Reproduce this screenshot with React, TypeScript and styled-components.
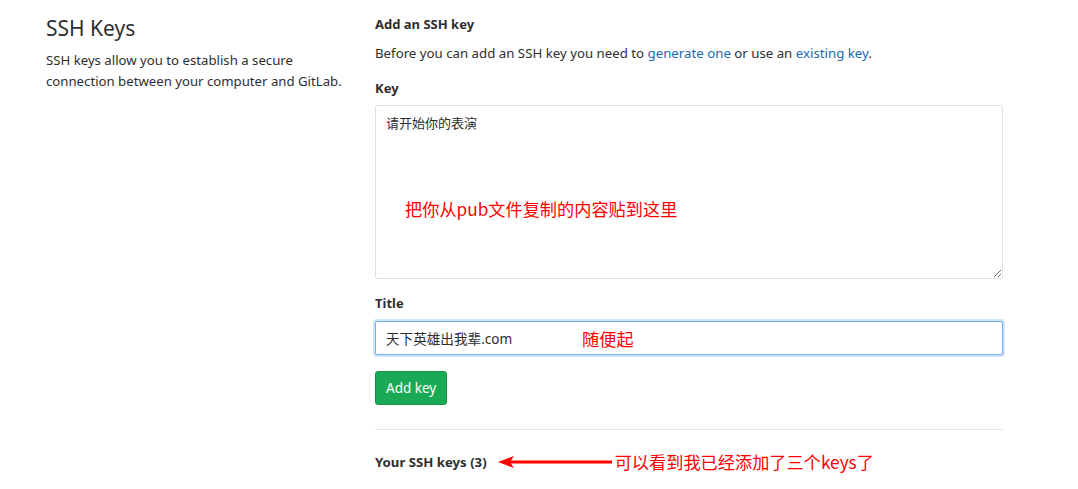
import React from "react";
import styled, { createGlobalStyle } from "styled-components";

const Global = createGlobalStyle`
  html, body { margin: 0; padding: 0; background: #fff; }
  body { font-family: "Noto Sans", "Noto Sans CJK SC", sans-serif; color: #2e2e2e; }
  * { box-sizing: border-box; }
`;

const Page = styled.div`
  display: flex;
  padding: 14px 0 0 46px;
  width: 1078px;
  height: 489px;
  overflow: hidden;
`;

const Side = styled.div`
  width: 329px;
  flex: none;
`;

const SideTitle = styled.h4`
  margin: 0;
  font-size: 21px;
  font-weight: 400;
  line-height: 28px;
  color: #2e2e2e;
`;

const SideText = styled.p`
  margin: 8px 0 0;
  font-size: 13.2px;
  line-height: 21px;
  color: #2e2e2e;
  width: 300px;
`;

const Main = styled.div`
  width: 628px;
  flex: none;
  display: flex;
  flex-direction: column;
`;

const Heading = styled.h5`
  margin: 0;
  font-size: 13px;
  font-weight: 700;
  line-height: 20px;
`;

const Text = styled.p`
  margin: 9px 0 0;
  font-size: 13.25px;
  line-height: 20px;
`;

const Link = styled.a`
  color: #1b69b6;
  text-decoration: none;
`;

const Label = styled.label<{ $mt: number }>`
  display: block;
  margin-top: ${(p) => p.$mt}px;
  font-size: 13px;
  font-weight: 700;
  line-height: 20px;
`;

const AreaWrap = styled.div`
  position: relative;
  margin-top: 7px;
`;

const Area = styled.textarea`
  display: block;
  width: 628px;
  height: 174px;
  border: 1px solid #e0e0e0;
  border-radius: 2px;
  padding: 8px 10px;
  font-family: "Noto Sans", "Noto Sans CJK SC", sans-serif;
  font-size: 13px;
  line-height: 18px;
  color: #2e2e2e;
  resize: vertical;
  outline: none;
`;

const Note = styled.span<{ $x: number; $y: number }>`
  position: absolute;
  left: ${(p) => p.$x}px;
  top: ${(p) => p.$y}px;
  color: #ff0000;
  font-family: "Noto Sans CJK SC", sans-serif;
  font-size: 17.2px;
  line-height: 20px;
  white-space: nowrap;
  pointer-events: none;
`;

const InputWrap = styled.div`
  position: relative;
  margin-top: 8px;
`;

const Input = styled.input`
  display: block;
  width: 628px;
  height: 34px;
  border: 1px solid #73afea;
  border-radius: 2px;
  box-shadow: 0 0 0 2px #cfe4fa;
  padding: 0 10px;
  font-family: "Noto Sans", "Noto Sans CJK SC", sans-serif;
  font-size: 13.6px;
  color: #2e2e2e;
  outline: none;
`;

const Button = styled.button`
  align-self: flex-start;
  margin-top: 16px;
  height: 34px;
  padding: 0 10px;
  background: #1aaa55;
  border: 1px solid #168f48;
  border-radius: 3px;
  color: #fff;
  font-family: "Noto Sans", sans-serif;
  font-size: 13.5px;
`;

const Rule = styled.hr`
  width: 628px;
  margin: 24px 0 0;
  border: 0;
  border-top: 1px solid #e5e5e5;
`;

const KeysRow = styled.div`
  display: flex;
  align-items: center;
  margin-top: 21px;
  height: 22px;
`;

const KeysTitle = styled.h5`
  margin: 0;
  font-size: 13.2px;
  font-weight: 700;
  line-height: 20px;
`;

const Arrow = styled.svg`
  margin-left: 11px;
  flex: none;
`;

const InlineNote = styled.span`
  color: #ff0000;
  font-family: "Noto Sans CJK SC", sans-serif;
  font-size: 17.2px;
  line-height: 20px;
  margin-left: 3px;
  white-space: nowrap;
`;

export default function App() {
  return (
    <>
      <Global />
      <Page>
        <Side>
          <SideTitle>SSH Keys</SideTitle>
          <SideText>
            SSH keys allow you to establish a secure connection between your computer and GitLab.
          </SideText>
        </Side>
        <Main>
          <Heading>Add an SSH key</Heading>
          <Text>
            Before you can add an SSH key you need to <Link href="#">generate one</Link> or use an{" "}
            <Link href="#">existing key</Link>.
          </Text>
          <Label $mt={15}>Key</Label>
          <AreaWrap>
            <Area defaultValue="请开始你的表演" />
            <Note $x={30} $y={94}>把你从pub文件复制的内容贴到这里</Note>
          </AreaWrap>
          <Label $mt={14}>Title</Label>
          <InputWrap>
            <Input defaultValue="天下英雄出我辈.com" />
            <Note $x={207} $y={8}>随便起</Note>
          </InputWrap>
          <Button>Add key</Button>
          <Rule />
          <KeysRow>
            <KeysTitle>Your SSH keys (3)</KeysTitle>
            <Arrow width="114" height="14" viewBox="0 0 114 14">
              <line x1="12" y1="7" x2="114" y2="7" stroke="#ff0000" strokeWidth="3" />
              <polygon points="0,7 16,1 12,7 16,13" fill="#ff0000" />
            </Arrow>
            <InlineNote>可以看到我已经添加了三个keys了</InlineNote>
          </KeysRow>
        </Main>
      </Page>
    </>
  );
}
